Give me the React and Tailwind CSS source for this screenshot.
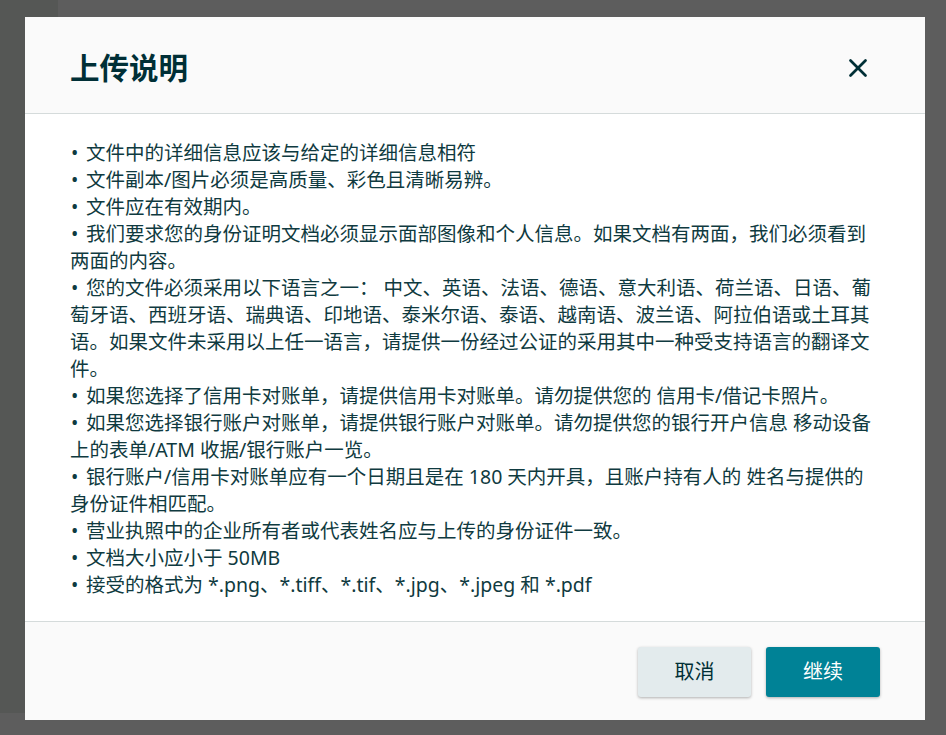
import { X } from 'lucide-react';

// b = starts with a bullet
const lines = [
  { b: true, t: '文件中的详细信息应该与给定的详细信息相符' },
  { b: true, t: '文件副本/图片必须是高质量、彩色且清晰易辨。' },
  { b: true, t: '文件应在有效期内。' },
  { b: true, t: '我们要求您的身份证明文档必须显示面部图像和个人信息。如果文档有两面，我们必须看到' },
  { t: '两面的内容。' },
  { b: true, t: '您的文件必须采用以下语言之一： 中文、英语、法语、德语、意大利语、荷兰语、日语、葡' },
  { t: '萄牙语、西班牙语、瑞典语、印地语、泰米尔语、泰语、越南语、波兰语、阿拉伯语或土耳其' },
  { t: '语。如果文件未采用以上任一语言，请提供一份经过公证的采用其中一种受支持语言的翻译文' },
  { t: '件。' },
  { b: true, t: '如果您选择了信用卡对账单，请提供信用卡对账单。请勿提供您的 信用卡/借记卡照片。' },
  { b: true, t: '如果您选择银行账户对账单，请提供银行账户对账单。请勿提供您的银行开户信息 移动设备' },
  { t: '上的表单/ATM 收据/银行账户一览。' },
  { b: true, t: '银行账户/信用卡对账单应有一个日期且是在 180 天内开具，且账户持有人的 姓名与提供的' },
  { t: '身份证件相匹配。' },
  { b: true, t: '营业执照中的企业所有者或代表姓名应与上传的身份证件一致。' },
  { b: true, t: '文档大小应小于 50MB' },
  { b: true, t: '接受的格式为 *.png、*.tiff、*.tif、*.jpg、*.jpeg 和 *.pdf' },
];

export default function App() {
  return (
    <div className="relative h-[735px] w-[946px] overflow-hidden bg-[#5d5d5d] font-['Noto_Sans','Noto_Sans_CJK_SC',sans-serif]">
      {/* page behind the overlay */}
      <div className="flex h-full">
        <div className="h-[713px] w-[58px] bg-[#555755]" />
        <div className="flex-1" />
      </div>

      {/* modal overlay */}
      <div className="absolute inset-0 pl-[25px] pt-[17px]">
        <div className="flex w-[900px] flex-col bg-white">
          {/* Header */}
          <div className="flex h-[97px] items-center justify-between border-b border-[#d5dbdb] bg-[#fafafa] pl-[45px] pr-[52px] pt-[6px]">
            <h1 className="text-[29.5px] font-bold text-[#002f36]">上传说明</h1>
            <X className="h-[30px] w-[30px] text-[#002f36]" strokeWidth={2.2} />
          </div>

          {/* Body */}
          <div className="h-[507px] px-[45px] pt-[25px] text-[19.5px] leading-[27px] text-[#0f3a40]">
            {lines.map((l, i) => (
              <div key={i} className="whitespace-pre">
                {l.b && <span className="inline-block w-[16px] pl-[1px]">•</span>}
                {l.t}
              </div>
            ))}
          </div>

          {/* Footer */}
          <div className="flex h-[99px] items-center justify-end gap-[15px] border-t border-[#d5dbdb] bg-[#fafafa] pr-[45px] pt-[1px]">
            <button className="h-[50px] w-[113px] rounded-[3px] bg-[#e3ebed] text-[20px] text-[#002f36] shadow-[0_1px_3px_rgba(0,0,0,0.3)]">取消</button>
            <button className="h-[50px] w-[114px] rounded-[3px] bg-[#008296] text-[20px] text-white shadow-[0_1px_3px_rgba(0,0,0,0.3)]">继续</button>
          </div>
        </div>
      </div>
    </div>
  );
}
